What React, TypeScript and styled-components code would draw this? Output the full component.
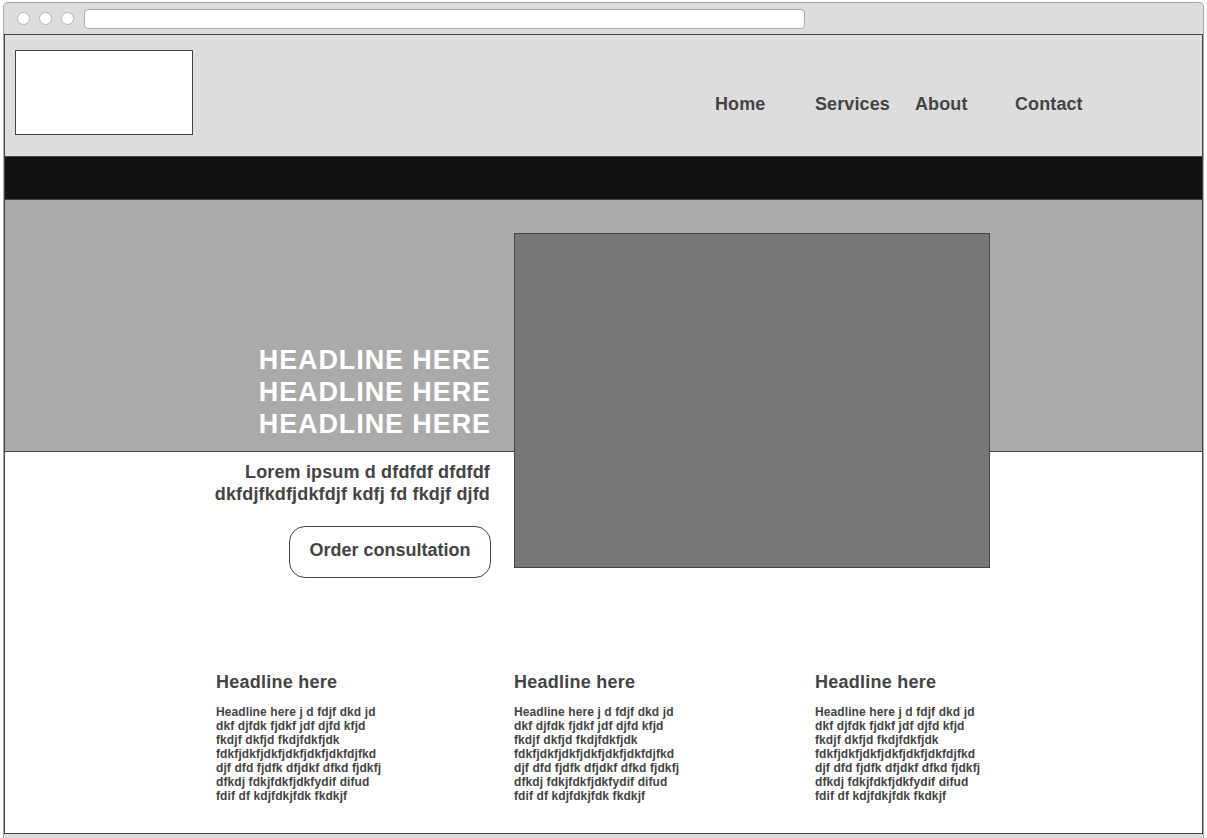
import React from "react";
import styled, { createGlobalStyle } from "styled-components";

const GlobalStyle = createGlobalStyle`
  html, body { margin: 0; padding: 0; background: #ffffff; }
  body { font-family: "Liberation Sans", Arial, Helvetica, sans-serif; }
  * { box-sizing: border-box; }
`;

const Window = styled.div`
  margin: 2px 0 0 3px;
  width: 1201px;
  height: 836px;
  background: #dddddd;
  border: 1px solid #a8a8a8;
  border-bottom: none;
  border-radius: 5px 5px 0 0;
  display: flex;
  flex-direction: column;
`;

const TitleBar = styled.div`
  height: 31px;
  display: flex;
  align-items: center;
  padding-left: 13px;
  gap: 9px;
`;

const Dot = styled.span`
  width: 13px;
  height: 13px;
  border-radius: 50%;
  background: #ffffff;
  border: 1px solid #b4b4b4;
`;

const AddressBar = styled.div`
  margin-left: 1px;
  width: 721px;
  height: 20px;
  background: #ffffff;
  border: 1px solid #a8a8a8;
  border-radius: 4px;
`;

const Page = styled.div`
  height: 800px;
  border: 1px solid #444444;
  background: #ffffff;
  overflow: hidden;
  display: flex;
  flex-direction: column;
`;

const Header = styled.header`
  height: 121px;
  background: #dddddd;
  display: flex;
  align-items: flex-start;
  padding: 15px 10px 0 10px;
`;

const Logo = styled.div`
  width: 178px;
  height: 85px;
  background: #ffffff;
  border: 1px solid #444444;
`;

const Nav = styled.nav`
  display: flex;
  margin-left: 522px;
  padding-top: 43px;
`;

const NavItem = styled.a`
  width: 100px;
  font-size: 18px;
  line-height: 22px;
  font-weight: 700;
  letter-spacing: 0.1px;
  color: #444444;
  text-decoration: none;
`;

const Band = styled.div`
  height: 44px;
  background: #111111;
  border-top: 1px solid #444444;
  border-bottom: 1px solid #444444;
`;

const Hero = styled.section`
  display: flex;
  align-items: flex-start;
  gap: 23px;
  padding: 33px 0 0 195px;
  background: linear-gradient(
    to bottom,
    #aaaaaa 0,
    #aaaaaa 251px,
    #444444 251px,
    #444444 252px,
    #ffffff 252px
  );
`;

const HeroText = styled.div`
  width: 291px;
  margin-top: 111px;
  display: flex;
  flex-direction: column;
  align-items: flex-end;
  text-align: right;
`;

const Headline = styled.h1`
  margin: 0;
  padding-right: 0;
  font-size: 27px;
  line-height: 32px;
  font-weight: 700;
  letter-spacing: 0.9px;
  color: #ffffff;
  white-space: pre-line;
`;

const Lead = styled.p`
  margin: 21px 1px 0 0;
  font-size: 18px;
  line-height: 22px;
  font-weight: 700;
  letter-spacing: 0.15px;
  color: #444444;
  white-space: pre-line;
`;

const CTA = styled.button`
  margin-top: 21px;
  width: 202px;
  height: 52px;
  background: #ffffff;
  border: 1px solid #444444;
  border-radius: 16px;
  font-family: "Liberation Sans", Arial, Helvetica, sans-serif;
  font-size: 18px;
  font-weight: 700;
  color: #444444;
  padding: 0 0 4px 0;
`;

const HeroImage = styled.div`
  width: 476px;
  height: 335px;
  background: #777777;
  border: 1px solid #444444;
`;

const Features = styled.section`
  display: grid;
  grid-template-columns: 298px 301px 298px;
  padding: 93px 0 0 211px;
`;

const Feature = styled.div`
  display: flex;
  flex-direction: column;
`;

const FeatureTitle = styled.h2`
  margin: 0;
  font-size: 18px;
  line-height: 22px;
  font-weight: 700;
  letter-spacing: 0.25px;
  color: #444444;
`;

const FeatureBody = styled.p`
  margin: 12px 0 0 0;
  font-size: 12px;
  line-height: 14px;
  font-weight: 700;
  letter-spacing: 0.1px;
  color: #444444;
  white-space: pre-line;
`;

const body = `Headline here j d fdjf dkd jd
dkf djfdk fjdkf jdf djfd kfjd
fkdjf dkfjd fkdjfdkfjdk
fdkfjdkfjdkfjdkfjdkfjdkfdjfkd
djf dfd fjdfk dfjdkf dfkd fjdkfj
dfkdj fdkjfdkfjdkfydif difud
fdif df kdjfdkjfdk fkdkjf`;

export default function App() {
  return (
    <>
      <GlobalStyle />
      <Window>
        <TitleBar>
          <Dot />
          <Dot />
          <Dot />
          <AddressBar />
        </TitleBar>
        <Page>
          <Header>
            <Logo />
            <Nav>
              <NavItem>Home</NavItem>
              <NavItem>Services</NavItem>
              <NavItem>About</NavItem>
              <NavItem>Contact</NavItem>
            </Nav>
          </Header>
          <Band />
          <Hero>
            <HeroText>
              <Headline>{"HEADLINE HERE\nHEADLINE HERE\nHEADLINE HERE"}</Headline>
              <Lead>{"Lorem ipsum d dfdfdf dfdfdf\ndkfdjfkdfjdkfdjf kdfj fd fkdjf djfd"}</Lead>
              <CTA>Order consultation</CTA>
            </HeroText>
            <HeroImage />
          </Hero>
          <Features>
            {[0, 1, 2].map((i) => (
              <Feature key={i}>
                <FeatureTitle>Headline here</FeatureTitle>
                <FeatureBody>{body}</FeatureBody>
              </Feature>
            ))}
          </Features>
        </Page>
      </Window>
    </>
  );
}
